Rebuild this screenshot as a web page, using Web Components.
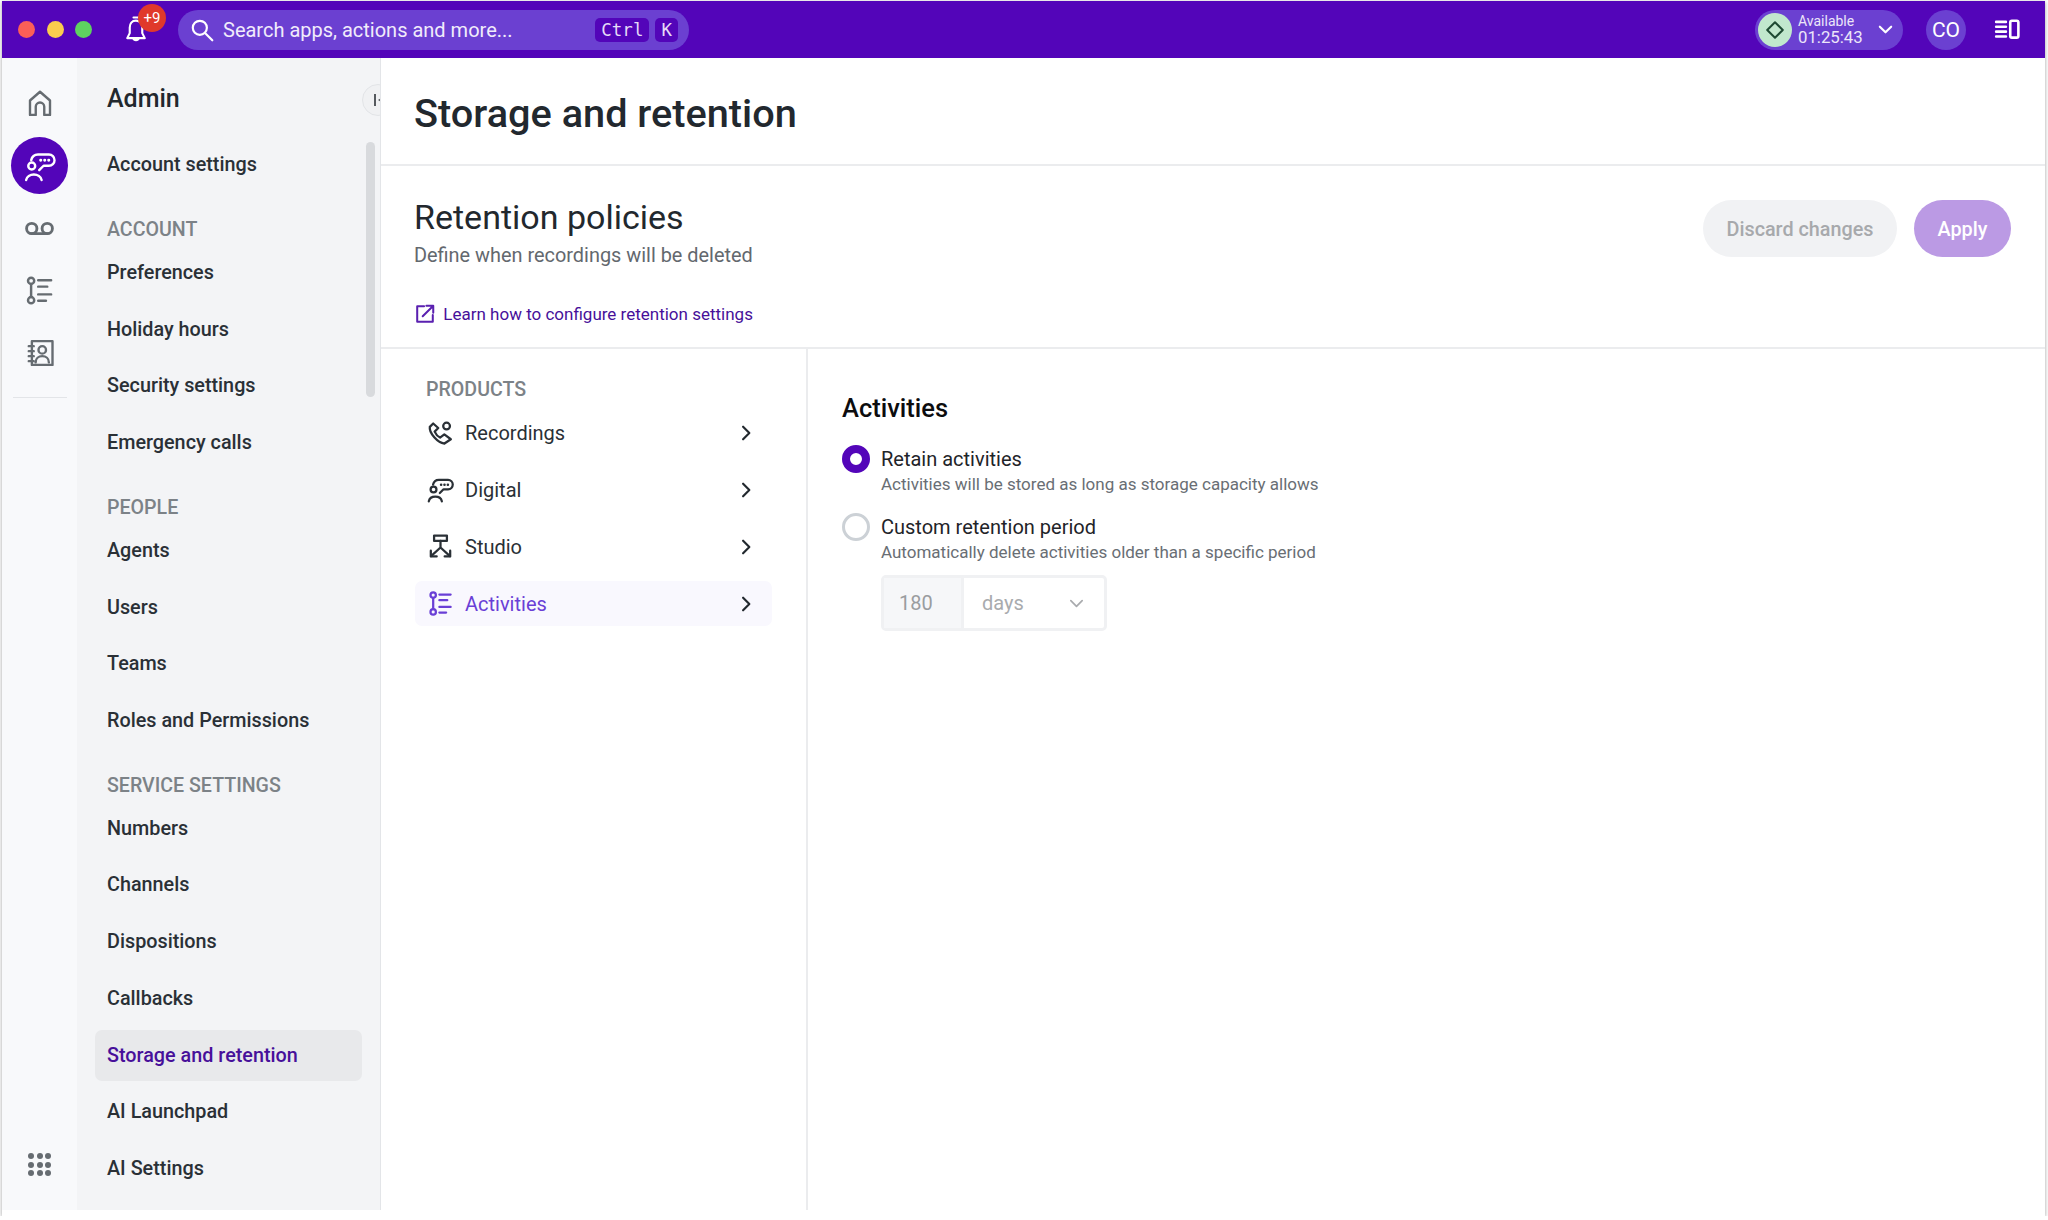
<!DOCTYPE html>
<html lang="en">
<head>
<meta charset="utf-8">
<title>Storage and retention</title>
<style>
  html, body { margin: 0; background: #fff; font-family: Roboto, "Liberation Sans", sans-serif; }
</style>
</head>
<body>
<app-window>
  <top-bar slot="top"></top-bar>
  <rail-nav slot="rail"></rail-nav>
  <side-nav slot="side" heading="Admin">
    <nav-item>Account settings</nav-item>
    <nav-label>ACCOUNT</nav-label>
    <nav-item>Preferences</nav-item>
    <nav-item>Holiday hours</nav-item>
    <nav-item>Security settings</nav-item>
    <nav-item>Emergency calls</nav-item>
    <nav-label>PEOPLE</nav-label>
    <nav-item>Agents</nav-item>
    <nav-item>Users</nav-item>
    <nav-item>Teams</nav-item>
    <nav-item>Roles and Permissions</nav-item>
    <nav-label>SERVICE SETTINGS</nav-label>
    <nav-item>Numbers</nav-item>
    <nav-item>Channels</nav-item>
    <nav-item>Dispositions</nav-item>
    <nav-item>Callbacks</nav-item>
    <nav-item active>Storage and retention</nav-item>
    <nav-item>AI Launchpad</nav-item>
    <nav-item>AI Settings</nav-item>
  </side-nav>
  <main-page>
    <policy-head slot="head"></policy-head>
    <product-list slot="list">
      <product-item icon="recordings">Recordings</product-item>
      <product-item icon="digital">Digital</product-item>
      <product-item icon="studio">Studio</product-item>
      <product-item icon="activities" active>Activities</product-item>
    </product-list>
    <activity-form slot="detail">
      <radio-option checked label="Retain activities">Activities will be stored as long as storage capacity allows</radio-option>
      <radio-option label="Custom retention period">Automatically delete activities older than a specific period</radio-option>
      <period-field></period-field>
    </activity-form>
  </main-page>
</app-window>

<script>
const ICONS = {
  home: `<path d="M4 21.5V10l8-7 8 7v11.5h-4.6V15a3.4 3.4 0 0 0-6.8 0v6.5z"/>`,
  digital: `<circle cx="5.800" cy="12" r="2.600"/><path d="M1.600 22.500a5.900 5 0 0 1 11.600 0"/><path d="M5.400 7.600C6 5 8 3.400 10.500 3.400h8.200a4.200 4.200 0 0 1 0 8.400h-4l-3.300 3.300"/><path d="M12.500 7.700h.1M15.500 7.700h.1M18.500 7.700h.1" stroke-width="2.200"/>`,
  voicemail: `<circle cx="6" cy="12" r="4"/><circle cx="18" cy="12" r="4"/><path d="M6 16h12"/>`,
  activities: `<circle cx="5.500" cy="4.500" r="2.400"/><circle cx="5.500" cy="19.500" r="2.400"/><path d="M5.500 7v10"/><path d="M11 4h10M11 9h7M11 15h10M11 20h6"/>`,
  contacts: `<path d="M5.500 2.500H22v19H5.500z"/><path d="M3 6.500h4M3 10.500h4M3 14.500h4M3 18.500h4"/><circle cx="13.800" cy="9.500" r="3"/><path d="M8.500 19.500c0-3 2.400-5 5.300-5s5.300 2 5.300 5"/>`,
  recordings: `<path d="M5.500 4 2.500 7c-.8 5.500 7 14 13 14.800l5.700-3.800-5.800-4.300-3.800 2.800c-2-1-3.800-3-4.800-5.300l3.200-3.200z"/><circle cx="17.400" cy="6.300" r="3"/>`,
  studio: `<path d="M6.300 2.300h11.400v4.800H6.300z"/><path d="M12 7.100v5.800M12 12.900l-8.400 7.700M12 12.900l8.400 7.700"/><path d="M3.400 15.700v5.100h5.200M20.600 15.700v5.100h-4.900"/>`,
  search: `<circle cx="10" cy="10" r="6.500"/><path d="m15 15 6.500 6.500"/>`,
  bell: `<path d="M12 4.500c-3.300 0-5 2.400-5 5.500v4.500L5 18.500h14l-2-4V10c0-3.100-1.700-5.500-5-5.500z"/><path d="M10 2h4M9.800 18.500a2.300 2.300 0 0 0 4.400 0"/>`,
  panel: `<path d="M2 4.500h9M2 9h9M2 13.500h9M2 18h9" stroke-width="2.400"/><rect x="15" y="3.500" width="7.500" height="15.500" rx="1.500" stroke-width="2.400"/>`,
  external: `<path d="M11 3.500H3.500v17h17V13"/><path d="M9.500 14.500 20.500 3.500M13.500 3h7.500v7.500"/>`,
  right: `<path d="m8.500 4.500 7.500 7.500-7.500 7.500"/>`,
  down: `<path d="m4 8 8 8 8-8"/>`,
  diamond: `<path d="M12 3.500 20.500 12 12 20.500 3.500 12z"/>`
};

class UiIcon extends HTMLElement {
  connectedCallback() {
    const size = this.getAttribute("size") || 24;
    const stroke = this.getAttribute("stroke") || 2;
    const root = this.attachShadow({ mode: "open" });
    root.innerHTML = `
      <style>:host { display: inline-flex; flex: none; } svg { display: block; }</style>
      <svg width="${size}" height="${size}" viewBox="0 0 24 24" fill="none" stroke="currentColor"
        stroke-width="${stroke}" stroke-linecap="round" stroke-linejoin="round">${ICONS[this.getAttribute("name")]}</svg>`;
  }
}
customElements.define("ui-icon", UiIcon);

class AppWindow extends HTMLElement {
  constructor() {
    super();
    this.attachShadow({ mode: "open" }).innerHTML = `
      <style>
        :host { display: flex; flex-direction: column; width: 2043px; height: 1215px; margin: 1px 0 0 2px;
          box-shadow: 0 1px 4px rgba(0,0,0,.38); overflow: hidden; background: #fff; }
        .body { display: flex; flex: 1; min-height: 0; padding-bottom: 6px; }
      </style>
      <slot name="top"></slot>
      <div class="body"><slot name="rail"></slot><slot name="side"></slot><slot></slot></div>`;
  }
}
customElements.define("app-window", AppWindow);

class TopBar extends HTMLElement {
  constructor() {
    super();
    this.attachShadow({ mode: "open" }).innerHTML = `
      <style>
        :host { display: flex; align-items: center; height: 57px; background: #5305b9; color: #fff; padding: 0 25px 0 16px; flex: none; }
        .lights { display: flex; gap: 11.500px; }
        .lights i { width: 17px; height: 17px; border-radius: 50%; }
        .bell { position: relative; display: flex; margin-left: 28.500px; }
        .badge { position: absolute; left: 17.500px; top: -11px; width: 28px; height: 28px; border-radius: 50%; background: #e0392b;
          font-size: 15px; line-height: 28px; text-align: center; }
        .search { display: flex; align-items: center; width: 511px; height: 40px; margin-left: 27.500px; border-radius: 20px; background: #6b40d1; padding: 0 11px; box-sizing: border-box; }
        .search span { margin-left: 8px; font-size: 20px; color: #f1ecfb; flex: 1; white-space: nowrap; }
        kbd { font: 17.500px "DejaVu Sans Mono", "Liberation Mono", monospace; background: #5305b9; border-radius: 5px; height: 24px; line-height: 24px; padding: 0 6px; margin-left: 6px; color: #e6dcf7; }
        .gap { flex: 1; }
        .status { display: flex; align-items: center; width: 148px; height: 40px; border-radius: 20px; background: #6b40d1; box-sizing: border-box; padding: 0 9px 0 3px; }
        .dot { width: 34px; height: 34px; border-radius: 50%; background: #c1e8cd; color: #1e4a32; display: flex; align-items: center; justify-content: center; }
        .txt { margin-left: 6px; flex: 1; display: flex; flex-direction: column; color: #ece6f9; }
        .txt small { font-size: 14px; line-height: 15px; }
        .txt b { font-size: 16.800px; font-weight: 400; line-height: 17px; }
        .avatar { width: 40px; height: 40px; border-radius: 50%; background: #6b40d1; margin-left: 23px; font-size: 21px; line-height: 40px; text-align: center; }
        .panel { display: flex; margin-left: 28px; }
      </style>
      <div class="lights"><i style="background:#fc5f57"></i><i style="background:#fbcd4e"></i><i style="background:#5ed260"></i></div>
      <div class="bell"><ui-icon name="bell" size="30" stroke="1.700"></ui-icon><span class="badge">+9</span></div>
      <div class="search"><ui-icon name="search" size="26" stroke="2"></ui-icon><span>Search apps, actions and more...</span><kbd>Ctrl</kbd><kbd>K</kbd></div>
      <div class="gap"></div>
      <div class="status"><div class="dot"><ui-icon name="diamond" size="22" stroke="2.200"></ui-icon></div>
        <div class="txt"><small>Available</small><b>01:25:43</b></div><ui-icon name="down" size="17" stroke="3"></ui-icon></div>
      <div class="avatar">CO</div>
      <div class="panel"><ui-icon name="panel" size="26" stroke="2"></ui-icon></div>`;
  }
}
customElements.define("top-bar", TopBar);

class RailNav extends HTMLElement {
  constructor() {
    super();
    this.attachShadow({ mode: "open" }).innerHTML = `
      <style>
        :host { display: flex; flex-direction: column; align-items: center; width: 75px; background: #f8f9fb; color: #666c71; padding-top: 14px; box-sizing: border-box; }
        .b { width: 57px; height: 62px; display: flex; align-items: center; justify-content: center; box-sizing: border-box; }
        .on { width: 57px; height: 57px; margin: 3px 0 3px; border-radius: 50%; background: #5305b9; color: #fff; }
        hr { width: 54px; border: 0; border-top: 1px solid #e3e5e8; margin: 14.200px 0 0; }
        .dots { margin-top: auto; margin-bottom: 34px; display: grid; grid-template-columns: repeat(3, 6px); gap: 2.500px; }
        .dots i { width: 6px; height: 6px; border-radius: 50%; background: #666c71; }
      </style>
      <div class="b"><ui-icon name="home" size="30" stroke="1.900"></ui-icon></div>
      <div class="b on"><ui-icon name="digital" size="32" stroke="1.800"></ui-icon></div>
      <div class="b"><ui-icon name="voicemail" size="31" stroke="2.200"></ui-icon></div>
      <div class="b"><ui-icon name="activities" size="31" stroke="1.900"></ui-icon></div>
      <div class="b" style="padding-top:2px"><ui-icon name="contacts" size="30" stroke="1.900"></ui-icon></div>
      <hr>
      <div class="dots">${"<i></i>".repeat(9)}</div>`;
  }
}
customElements.define("rail-nav", RailNav);

class SideNav extends HTMLElement {
  connectedCallback() {
    this.attachShadow({ mode: "open" }).innerHTML = `
      <style>
        :host { display: block; position: relative; width: 304px; box-sizing: border-box; background: #f3f4f6; border-right: 1px solid #e3e5e8; overflow: hidden; padding: 0 17px 0 18px; color: #22282e; }
        h2 { margin: 0; font-size: 25px; font-weight: 500; line-height: 32px; padding: 25px 0 20px 12px; }
        .list { display: flex; flex-direction: column; gap: 5.700px; margin-top: 4px; }
        .bar { position: absolute; right: 5px; top: 84px; width: 9px; height: 255px; border-radius: 5px; background: #d8dadd; }
        .collapse { position: absolute; left: 285px; top: 26px; width: 32px; height: 32px; border-radius: 50%; background: #f0f1f3; border: 1px solid #e2e4e7; box-sizing: border-box; }
        .collapse i { position: absolute; left: 11px; top: 9px; width: 2px; height: 12px; background: #55595e; }
        .collapse b { position: absolute; left: 15px; top: 13px; border: 2px solid transparent; border-right: 3px solid #55595e; border-left: 0; }
      </style>
      <h2>${this.getAttribute("heading")}</h2>
      <div class="list"><slot></slot></div>
      <div class="bar"></div>
      <div class="collapse"><i></i><b></b></div>`;
  }
}
customElements.define("side-nav", SideNav);

class NavItem extends HTMLElement {
  constructor() {
    super();
    this.attachShadow({ mode: "open" }).innerHTML = `
      <style>
        :host { display: flex; align-items: center; height: 51px; padding-left: 12px; width: 267px; box-sizing: border-box; border-radius: 7px; font-size: 19.800px; font-weight: 500; color: #2a3036; }
        :host([active]) { background: #e8e9eb; color: #47109a; }
      </style>
      <slot></slot>`;
  }
}
customElements.define("nav-item", NavItem);

class NavLabel extends HTMLElement {
  constructor() {
    super();
    this.attachShadow({ mode: "open" }).innerHTML = `
      <style>
        :host { display: block; margin: 22.800px 0 -1.300px; height: 24px; line-height: 24px; padding-left: 12px; font-size: 19.600px; font-weight: 500; color: #7c8287; }
      </style>
      <slot></slot>`;
  }
}
customElements.define("nav-label", NavLabel);

class MainPage extends HTMLElement {
  constructor() {
    super();
    this.attachShadow({ mode: "open" }).innerHTML = `
      <style>
        :host { flex: 1; display: flex; flex-direction: column; min-width: 0; background: #fff; }
        h1 { margin: 0; height: 108px; box-sizing: border-box; padding: 32px 0 0 33px; font-size: 39.700px; line-height: 48px; font-weight: 500; color: #22282e; border-bottom: 2px solid #ebecee; flex: none; }
        .split { flex: 1; display: flex; min-height: 0; }
      </style>
      <h1>Storage and retention</h1>
      <slot name="head"></slot>
      <div class="split"><slot name="list"></slot><slot name="detail"></slot></div>`;
  }
}
customElements.define("main-page", MainPage);

class PolicyHead extends HTMLElement {
  constructor() {
    super();
    this.attachShadow({ mode: "open" }).innerHTML = `
      <style>
        :host { display: flex; justify-content: space-between; height: 183px; box-sizing: border-box; padding: 30.700px 34px 0 33px; border-bottom: 2px solid #ebecee; flex: none; }
        h2 { margin: 0; font-size: 34px; line-height: 40px; font-weight: 400; color: #22282e; }
        p { margin: 5.200px 0 0; font-size: 19.900px; line-height: 28px; color: #63686e; }
        a { display: flex; align-items: center; gap: 7.300px; margin-top: 33.600px; font-size: 17px; line-height: 22px; color: #47109a; text-decoration: none; }
        a ui-icon { color: #5a20b0; }
        .actions { display: flex; gap: 17px; margin-top: 3.300px; }
        button { height: 57px; border: 0; border-radius: 29px; font: 500 19.800px Roboto, sans-serif; padding: 2px 0 0; }
        .discard { width: 194px; background: #f1f2f4; color: #a7a9ac; }
        .apply { width: 97px; background: #bb9ae4; color: #fff; }
      </style>
      <div>
        <h2>Retention policies</h2>
        <p>Define when recordings will be deleted</p>
        <a href="#"><ui-icon name="external" size="22" stroke="2.200"></ui-icon>Learn how to configure retention settings</a>
      </div>
      <div class="actions"><button class="discard">Discard changes</button><button class="apply">Apply</button></div>`;
  }
}
customElements.define("policy-head", PolicyHead);

class ProductList extends HTMLElement {
  constructor() {
    super();
    this.attachShadow({ mode: "open" }).innerHTML = `
      <style>
        :host { display: block; width: 427px; box-sizing: border-box; border-right: 2px solid #ebecee; padding: 29.300px 34px 0; }
        .label { height: 24px; line-height: 24px; padding-left: 11px; font-size: 19.600px; font-weight: 500; color: #7c8287; margin-bottom: 8px; }
        .rows { display: flex; flex-direction: column; gap: 12px; }
      </style>
      <div class="label">PRODUCTS</div>
      <div class="rows"><slot></slot></div>`;
  }
}
customElements.define("product-list", ProductList);

class ProductItem extends HTMLElement {
  connectedCallback() {
    this.attachShadow({ mode: "open" }).innerHTML = `
      <style>
        :host { display: flex; align-items: center; height: 45px; padding: 0 16px 0 12px; border-radius: 7px; font-size: 20px; color: #2a3036; }
        :host([active]) { background: #f9f8fe; color: #6a3fd6; }
        span { flex: 1; margin-left: 11px; }
        .chev { color: #23292f; }
      </style>
      <ui-icon name="${this.getAttribute("icon")}" size="27" stroke="2"></ui-icon>
      <span><slot></slot></span>
      <ui-icon class="chev" name="right" size="20" stroke="2.600"></ui-icon>`;
  }
}
customElements.define("product-item", ProductItem);

class ActivityForm extends HTMLElement {
  constructor() {
    super();
    this.attachShadow({ mode: "open" }).innerHTML = `
      <style>
        :host { display: block; flex: 1; padding: 44px 0 0 34px; }
        h3 { margin: 0 0 22.400px; font-size: 25.500px; line-height: 30px; font-weight: 500; color: #0c0c0e; }
      </style>
      <h3>Activities</h3>
      <slot></slot>`;
  }
}
customElements.define("activity-form", ActivityForm);

class RadioOption extends HTMLElement {
  connectedCallback() {
    this.attachShadow({ mode: "open" }).innerHTML = `
      <style>
        :host { display: flex; gap: 11px; height: 68px; }
        i { width: 28px; height: 28px; border-radius: 50%; border: 3px solid #ccd1d6; box-sizing: border-box; flex: none; background: #fff; }
        :host([checked]) i { border: 8px solid #5305b9; }
        b { display: block; font-weight: 400; font-size: 20px; line-height: 26px; color: #1f2429; margin-top: 1px; }
        p { margin: 0; font-size: 17px; line-height: 24px; color: #696e74; }
      </style>
      <i></i>
      <div><b>${this.getAttribute("label")}</b><p><slot></slot></p></div>`;
  }
}
customElements.define("radio-option", RadioOption);

class PeriodField extends HTMLElement {
  constructor() {
    super();
    this.attachShadow({ mode: "open" }).innerHTML = `
      <style>
        :host { display: flex; width: 226px; height: 56px; margin: -6px 0 0 39px; box-sizing: border-box; border: 3px solid #f0f1f3; border-radius: 5px; font-size: 20px; color: #a9abae; background: #fff; }
        .num { width: 80px; background: #f6f7f9; border-right: 3px solid #f0f1f3; padding-left: 15px; line-height: 50px; box-sizing: border-box; color: #9a9da0; }
        .unit { flex: 1; display: flex; align-items: center; justify-content: space-between; padding: 0 19px 0 18px; }
      </style>
      <div class="num">180</div>
      <div class="unit">days<ui-icon name="down" size="17" stroke="2.400"></ui-icon></div>`;
  }
}
customElements.define("period-field", PeriodField);
</script>
</body>
</html>
